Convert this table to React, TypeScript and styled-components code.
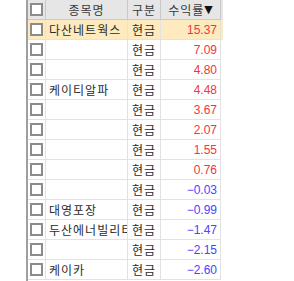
import React from 'react';
import styled, { createGlobalStyle } from 'styled-components';

const GlobalStyle = createGlobalStyle`
	html, body {
		margin: 0;
		padding: 0;
		background: #ffffff;
	}
	body {
		font-family: 'Noto Sans CJK KR', 'Liberation Sans', sans-serif;
	}
`;

type Holding = {
	name: string;
	type: string;
	rate: number;
};

const holdings: Holding[] = [
	{ name: '다산네트웍스', type: '현금', rate: 15.37 },
	{ name: '', type: '현금', rate: 7.09 },
	{ name: '', type: '현금', rate: 4.8 },
	{ name: '케이티알파', type: '현금', rate: 4.48 },
	{ name: '', type: '현금', rate: 3.67 },
	{ name: '', type: '현금', rate: 2.07 },
	{ name: '', type: '현금', rate: 1.55 },
	{ name: '', type: '현금', rate: 0.76 },
	{ name: '', type: '현금', rate: -0.03 },
	{ name: '대영포장', type: '현금', rate: -0.99 },
	{ name: '두산에너빌리티', type: '현금', rate: -1.47 },
	{ name: '', type: '현금', rate: -2.15 },
	{ name: '케이카', type: '현금', rate: -2.6 },
];

const formatRate = (rate: number) => {
	const text = Math.abs(rate).toFixed(2);
	return rate < 0 ? `−${text}` : text;
};

const App = () => {
	return (
		<>
			<GlobalStyle />
			<Page>
				<Grid>
					<HeaderRow>
						<HeaderCell>
							<CheckBox />
						</HeaderCell>
						<HeaderCell>종목명</HeaderCell>
						<HeaderCell>구분</HeaderCell>
						<HeaderCell>
							수익률<SortArrow>▼</SortArrow>
						</HeaderCell>
					</HeaderRow>
					{holdings.map((h, i) => (
						<Row key={i} $selected={i === 0}>
							<CheckCell>
								<CheckBox />
							</CheckCell>
							<NameCell>{h.name}</NameCell>
							<TypeCell>{h.type}</TypeCell>
							<RateCell $negative={h.rate < 0}>{formatRate(h.rate)}</RateCell>
						</Row>
					))}
				</Grid>
			</Page>
		</>
	);
};

export default App;

const Page = styled.div`
	width: 294px;
	height: 281px;
	overflow: hidden;
	padding-left: 26px;
	box-sizing: border-box;
`;

const Grid = styled.div`
	width: 195px;
	border-left: 2px solid #a0a0a0;
	min-height: 281px;
`;

const columns = '18px 82px 33px 60px';

const HeaderRow = styled.div`
	display: grid;
	grid-template-columns: ${columns};
	height: 20px;
	background: #e6e6e6;
`;

const HeaderCell = styled.div`
	display: flex;
	align-items: center;
	justify-content: center;
	box-sizing: border-box;
	border-right: 1px solid #c9c9c9;
	border-bottom: 1px solid #c9c9c9;
	font-size: 12px;
	letter-spacing: 1px;
	color: #3a3a3a;
	white-space: nowrap;
	overflow: hidden;
`;

const SortArrow = styled.span`
	font-family: 'DejaVu Sans', sans-serif;
	font-size: 11px;
	letter-spacing: 0;
	color: #111;
`;

const Row = styled.div<{ $selected?: boolean }>`
	display: grid;
	grid-template-columns: ${columns};
	height: 20px;
	background: ${(p) => (p.$selected ? '#fdebbf' : '#ffffff')};
`;

const Cell = styled.div`
	display: flex;
	align-items: center;
	box-sizing: border-box;
	border-right: 1px solid #e2e2e2;
	border-bottom: 1px solid #e2e2e2;
	font-size: 12px;
	letter-spacing: 1px;
	color: #2b2b2b;
	white-space: nowrap;
	overflow: hidden;
`;

const CheckCell = styled(Cell)`
	justify-content: center;
`;

const NameCell = styled(Cell)`
	padding-left: 3px;
`;

const TypeCell = styled(Cell)`
	justify-content: center;
`;

const RateCell = styled(Cell)<{ $negative?: boolean }>`
	justify-content: flex-end;
	padding-right: 3px;
	letter-spacing: 0;
	font-family: 'Liberation Sans', sans-serif;
	color: ${(p) => (p.$negative ? '#4646ff' : '#f5333f')};
`;

const CheckBox = styled.span`
	display: block;
	width: 13px;
	height: 13px;
	box-sizing: border-box;
	border: 2px solid #8c8c8c;
	background: #ffffff;
`;
